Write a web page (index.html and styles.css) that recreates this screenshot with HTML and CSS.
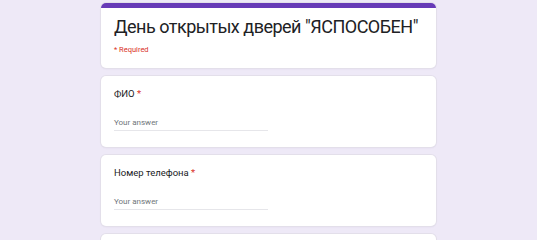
FILE: index.html
```html
<!DOCTYPE html>
<html lang="ru">
<head>
<meta charset="utf-8">
<title>День открытых дверей "ЯСПОСОБЕН"</title>
<link rel="stylesheet" href="styles.css">
</head>
<body>
<main class="form">
  <section class="card card-header">
    <div class="accent"></div>
    <div class="header-body">
      <h1 class="form-title">День открытых дверей "ЯСПОСОБЕН"</h1>
      <div class="required-note">* Required</div>
    </div>
  </section>
  <section class="card question">
    <div class="q-title">ФИО <span class="star">*</span></div>
    <div class="answer"><span class="placeholder">Your answer</span></div>
  </section>
  <section class="card question">
    <div class="q-title">Номер телефона <span class="star">*</span></div>
    <div class="answer"><span class="placeholder">Your answer</span></div>
  </section>
  <section class="card question"></section>
</main>
</body>
</html>
```

FILE: styles.css
```css
html, body {
  margin: 0;
  padding: 0;
}

body {
  background: #eee9f7;
  font-family: Roboto, "Liberation Sans", Arial, sans-serif;
  color: #202124;
  overflow: hidden;
  height: 240px;
}

.form {
  width: 335px;
  margin: 0 auto;
  padding-top: 3px;
  display: flex;
  flex-direction: column;
  gap: 8px;
}

.card {
  background: #ffffff;
  border-radius: 5px;
  box-shadow: 0 0 0 1px #e3dfea, 0 1px 2px rgba(60, 40, 100, 0.08);
  box-sizing: border-box;
}

.card-header {
  height: 65px;
  overflow: hidden;
}

.accent {
  height: 5px;
  background: #673ab7;
}

.header-body {
  padding: 6px 13px 0 13px;
}

.form-title {
  margin: 0;
  font-size: 18px;
  line-height: 26px;
  font-weight: 400;
  color: #202124;
  letter-spacing: -0.5px;
  white-space: nowrap;
}

.required-note {
  margin-top: 4px;
  font-size: 7.5px;
  line-height: 12px;
  color: #d93025;
}

.question {
  height: 71px;
  padding: 11px 13px 0 13px;
}

.q-title {
  font-size: 9.5px;
  line-height: 14px;
  color: #202124;
}

.star {
  color: #d93025;
}

.answer {
  margin-top: 16px;
  width: 154px;
  border-bottom: 1px solid #e6e6ea;
  height: 13px;
}

.placeholder {
  font-size: 8px;
  line-height: 12px;
  color: #70757a;
  display: block;
}
```
